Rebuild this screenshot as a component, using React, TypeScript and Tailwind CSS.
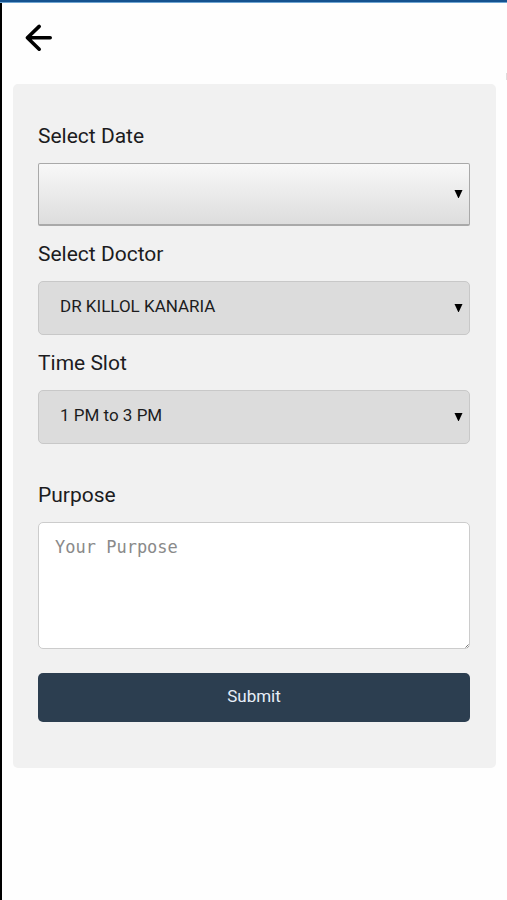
import { useState } from 'react';
import type { FormEvent, ReactNode } from 'react';

const DOCTORS = ['DR KILLOL KANARIA'];
const TIME_SLOTS = ['1 PM to 3 PM', '4 PM to 6 PM', '6 PM to 8 PM'];
const DATES = ['', 'Today', 'Tomorrow'];

const labelClass = 'block text-[21px] leading-6 text-[#1c1c1e]';
const selectClass =
  'block h-[54px] w-full appearance-none rounded-[5px] border border-[#c8c8c8] bg-[#dcdcdc] pl-[21px] pr-8 pb-[2px] text-[17px] text-[#1c1c1e]';
const dateClass =
  'block h-[63px] w-full appearance-none rounded-[2px] border border-[#a9a9a9] border-b-2 bg-linear-to-b from-[#f8f8f8] to-[#dddddd] pl-[21px] pr-8 text-[17px] text-[#1c1c1e]';

interface SelectFieldProps {
  id: string;
  label: string;
  options: string[];
  value: string;
  onChange: (value: string) => void;
  className?: string;
}

function Field({ id, label, children }: { id: string; label: string; children: ReactNode }) {
  return (
    <div className="flex flex-col gap-[15px]">
      <label htmlFor={id} className={labelClass}>{label}</label>
      {children}
    </div>
  );
}

function SelectField({ id, label, options, value, onChange, className = selectClass }: SelectFieldProps) {
  return (
    <Field id={id} label={label}>
      <div className="relative">
        <select id={id} value={value} onChange={(e) => onChange(e.target.value)} className={className}>
          {options.map((o) => (
            <option key={o} value={o}>{o}</option>
          ))}
        </select>
        <div className="pointer-events-none absolute inset-y-0 right-[7px] flex items-center pb-[2px]">
          <svg width="9" height="9" viewBox="0 0 9 9" aria-hidden="true">
            <path d="M0.5 1H8.5L4.8 9H4.2Z" fill="#000" />
          </svg>
        </div>
      </div>
    </Field>
  );
}

export default function App() {
  const [date, setDate] = useState('');
  const [doctor, setDoctor] = useState(DOCTORS[0]);
  const [slot, setSlot] = useState(TIME_SLOTS[0]);
  const [purpose, setPurpose] = useState('');

  function handleSubmit(e: FormEvent) {
    e.preventDefault();
  }

  return (
    <div className="relative flex min-h-screen flex-col bg-[#fefefe] font-[Roboto,sans-serif]">
      <div className="h-[3px] border-b border-[#6fa5d2] bg-[#15528f]" />
      <div className="flex grow flex-col border-l-2 border-black">
        <header className="flex h-[81px] items-start pl-[22px] pt-5">
          <button type="button" aria-label="Back" className="flex size-[30px] items-center justify-center">
            <svg width="30" height="30" viewBox="0 0 30 30" fill="none" stroke="#000" strokeWidth="3.6" strokeLinecap="round" strokeLinejoin="round" aria-hidden="true">
              <path d="M26.2 14.8H3.4M15.2 3.4L3.4 14.8L15.2 26.2" />
            </svg>
          </button>
        </header>

        <form onSubmit={handleSubmit} className="mx-[11px] flex flex-col rounded-[5px] bg-[#f1f1f1] pb-[46px] pl-[25px] pr-[26px] pt-10">
          <div className="flex flex-col gap-4">
            <SelectField id="date" label="Select Date" options={DATES} value={date} onChange={setDate} className={dateClass} />
            <SelectField id="doctor" label="Select Doctor" options={DOCTORS} value={doctor} onChange={setDoctor} />
            <SelectField id="slot" label="Time Slot" options={TIME_SLOTS} value={slot} onChange={setSlot} />
          </div>

          <div className="mt-[39px]">
            <Field id="purpose" label="Purpose">
              <div className="relative">
                <textarea
                  id="purpose"
                  value={purpose}
                  onChange={(e) => setPurpose(e.target.value)}
                  placeholder="Your Purpose"
                  className="block h-[127px] w-full resize-none rounded-[5px] border border-[#cccccc] bg-white px-4 py-3 font-['DejaVu_Sans_Mono',monospace] text-[17px] leading-6 text-[#1c1c1e] placeholder:text-[#8a8a8a]"
                />
                {/* resize grip */}
                <svg width="4" height="4" viewBox="0 0 4 4" className="pointer-events-none absolute bottom-px right-px" aria-hidden="true">
                  <path d="M3.5 0.5L0.5 3.5M3.5 2.5L2.5 3.5" stroke="#777" strokeWidth="1" />
                </svg>
              </div>
            </Field>
          </div>

          <button type="submit" className="mt-6 h-[49px] w-full rounded-[5px] bg-[#2c3e50] pb-[2px] text-[17px] text-[#e8eef8]">
            Submit
          </button>
        </form>
      </div>
      {/* scroll hint */}
      <div className="absolute right-0 top-[73px] h-[7px] w-px bg-[#dedede]" />
    </div>
  );
}
